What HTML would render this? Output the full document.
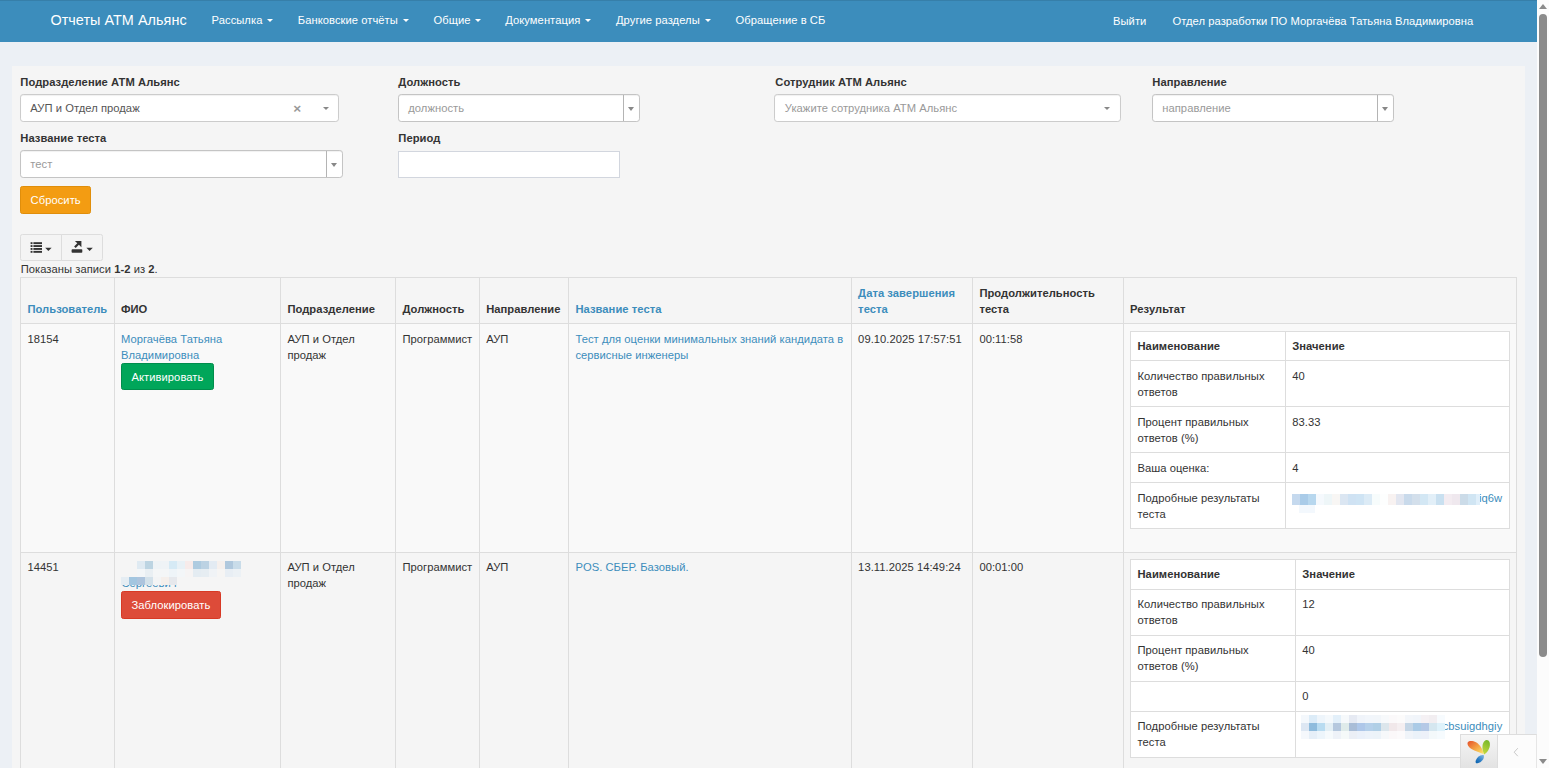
<!DOCTYPE html>
<html lang="ru">
<head>
<meta charset="utf-8">
<title>Отчеты АТМ Альянс</title>
<style>

*{box-sizing:border-box;}
html,body{margin:0;padding:0;}
body{font-family:"Liberation Sans",sans-serif;font-size:14px;line-height:20px;color:#333;background:#ecf0f5;overflow:hidden;letter-spacing:0.06px;}
a{color:#3c8dbc;text-decoration:none;}
#page{zoom:0.8;position:absolute;left:0;top:0;width:1936.25px;height:960px;overflow:hidden;background:#ecf0f5;}
/* navbar */
.navbar{position:absolute;left:0;top:0;width:1921.25px;height:52px;background:#3c8dbc;border:1px solid #367fa9;border-left:0;border-right:0;border-bottom-color:#3c8dbc;color:#fff;}
.navbar .brand{position:absolute;left:63px;top:14px;font-size:18px;line-height:20px;color:#fff;white-space:nowrap;}
.navbar .nav{position:absolute;top:13.75px;line-height:20px;color:#fff;white-space:nowrap;font-size:14px;}
.caret{position:relative;top:-1px;display:inline-block;width:0;height:0;margin-left:2px;vertical-align:middle;border-top:4px solid;border-right:4px solid transparent;border-left:4px solid transparent;}
/* panel */
.panel{position:absolute;left:15px;top:82.5px;width:1891.25px;height:900px;background:#f5f5f5;padding:10px;}
label{position:absolute;margin-left:0.4px;font-weight:bold;line-height:20px;white-space:nowrap;}
.s2{position:absolute;height:34px;background:#fff;border:1px solid #ccc;border-radius:4px;box-shadow:inset 0 1px 1px rgba(0,0,0,.075);color:#555;line-height:34.5px;padding-left:11.6px;white-space:nowrap;}
.s2.ph{color:#999;}
.s2 .clr{position:absolute;top:-0.8px;line-height:34px;font-weight:bold;color:#999;font-size:17px;letter-spacing:0;}
.s2 .arr{position:absolute;top:14.4px;width:0;height:0;border-style:solid;border-color:#888 transparent transparent;border-width:4px 4px 0 4px;}
.s2.cl{border-color:#c4c4c4;}
.s2.cl .box{position:absolute;right:0;top:0;bottom:0;width:20px;border-left:1px solid #b4b4b4;}
.s2.cl .box i{position:absolute;left:5px;top:14px;width:0;height:0;border-style:solid;border-color:#888 transparent transparent;border-width:5px 4px 0 4px;}
.inp{position:absolute;height:34px;background:#fff;border:1px solid #d2d6de;}
.btn{position:absolute;display:block;height:34px;line-height:20px;padding:6px 12px;border:1px solid transparent;border-radius:3px;color:#fff;white-space:nowrap;text-align:center;}
.btn-warning{background:#f39c12;border-color:#e08e0b;}
.btn-success{background:#00a65a;border-color:#008d4c;}
.btn-danger{background:#dd4b39;border-color:#d73925;}
.btn-default{background:#f4f4f4;border-color:#ddd;color:#444;}
.summary{position:absolute;left:25.8px;line-height:20px;white-space:nowrap;}
/* grid */
table{border-collapse:collapse;border-spacing:0;}
table.grid{position:absolute;left:25px;top:346.25px;width:1870px;table-layout:fixed;background:transparent;}
table.grid th,table.grid td{white-space:nowrap;border:1px solid #ddd;padding:8px 8px 6px;line-height:20px;vertical-align:top;text-align:left;}
table.grid thead th{vertical-align:bottom;border-bottom-width:2px;font-weight:bold;padding-bottom:7px;}
table.grid>tbody>tr>td{padding-top:9px;}
table.grid>tbody>tr.r2>td{padding-top:7.75px;}
table.grid tbody tr.odd{background:#f9f9f9;}
table.in{width:100%;table-layout:fixed;background:#fff;margin-bottom:20px;}
table.in th,table.in td{border:1px solid #ddd;padding:7px 8px 6px;line-height:20px;vertical-align:top;text-align:left;}
table.in th{font-weight:bold;}
table.in td{padding-top:7.6px;}
table.in.t1 td{padding-top:8.85px;}
.sub{position:relative;display:block;}
.sub .btn{position:relative;display:inline-block;}
/* scrollbar */
#sb{position:absolute;left:1921.25px;top:0;width:15px;height:960px;background:#fcfcfc;}
#sb .thumb{position:absolute;left:2.5px;width:10px;top:17.5px;height:803.5px;border-radius:5px;background:#8b8b8b;}
#sb .up{position:absolute;left:2.5px;top:5px;width:0;height:0;border-style:solid;border-width:0 5px 7px 5px;border-color:transparent transparent #8b8b8b;}
#sb .dn{position:absolute;left:2.5px;top:949px;width:0;height:0;border-style:solid;border-width:7px 5px 0 5px;border-color:#8b8b8b transparent transparent;}
/* yii toolbar */
#yii{position:absolute;left:1824.4px;top:917.8px;width:96.9px;height:43px;border:1px solid #ddd;border-right:1px solid #e6e6e6;background:#fcfcfc;}
#yii .logo{position:absolute;left:0;top:0;width:47px;height:42px;border-right:1px solid #ddd;background:linear-gradient(#f6f6f6,#e2e2e2);}
</style>
</head>
<body>
<div id="page">

<div class="navbar">
  <span class="brand">Отчеты АТМ Альянс</span>
  <span class="nav" style="left:264.5px">Рассылка <b class="caret"></b></span>
  <span class="nav" style="left:372.3px">Банковские отчёты <b class="caret"></b></span>
  <span class="nav" style="left:541.8px">Общие <b class="caret"></b></span>
  <span class="nav" style="left:631.6px">Документация <b class="caret"></b></span>
  <span class="nav" style="left:770px">Другие разделы <b class="caret"></b></span>
  <span class="nav" style="left:919.5px">Обращение в СБ</span>
  <span class="nav" style="left:1391.25px;top:15px">Выйти</span>
  <span class="nav" style="left:1465.6px;top:15px">Отдел разработки ПО Моргачёва Татьяна Владимировна</span>
</div>

<div class="panel" id="panel"></div>

<label style="left:25px;top:92.5px">Подразделение АТМ Альянс</label>
<div class="s2" style="left:25px;top:118px;width:398.5px">АУП и Отдел продаж<span class="clr" style="left:340.4px">×</span><i class="arr" style="left:377.5px"></i></div>

<label style="left:497.5px;top:92.5px">Должность</label>
<div class="s2 cl ph" style="left:497.5px;top:118px;width:302px">должность<span class="box"><i></i></span></div>

<label style="left:968.75px;top:92.5px">Сотрудник АТМ Альянс</label>
<div class="s2 ph" style="left:968.1px;top:118px;width:433.6px">Укажите сотрудника АТМ Альянс<i class="arr" style="left:411px"></i></div>

<label style="left:1440px;top:92.5px">Направление</label>
<div class="s2 cl ph" style="left:1440px;top:118px;width:302px">направление<span class="box"><i></i></span></div>

<label style="left:25px;top:162.5px">Название теста</label>
<div class="s2 cl ph" style="left:25px;top:188px;width:403.75px">тест<span class="box"><i></i></span></div>

<label style="left:497.5px;top:162.5px">Период</label>
<div class="inp" style="left:497.5px;top:188.5px;width:277px"></div>

<a class="btn btn-warning" style="left:25px;top:233px;width:89px">Сбросить</a>

<div class="btn btn-default" style="left:25px;top:292.5px;width:52px;height:34px;border-radius:3px 0 0 3px;"></div>
<div class="btn btn-default" style="left:76px;top:292.5px;width:53px;height:34px;border-radius:0 3px 3px 0;"></div>

<div class="summary" style="top:326.5px">Показаны записи <b>1-2</b> из <b>2</b>.</div>

<table class="grid">
<colgroup>
<col style="width:116.9px"><col style="width:208.1px"><col style="width:143.75px"><col style="width:104.7px"><col style="width:111.6px"><col style="width:353.4px"><col style="width:151.6px"><col style="width:188.4px"><col style="width:491.5px">
</colgroup>
<thead>
<tr style="height:57.5px">
<th><a>Пользователь</a></th><th>ФИО</th><th>Подразделение</th><th>Должность</th><th>Направление</th><th><a>Название теста</a></th><th><a>Дата завершения<br>теста</a></th><th>Продолжительность<br>теста</th><th>Результат</th>
</tr>
</thead>
<tbody>
<tr class="odd" style="height:286.25px">
<td>18154</td>
<td><a>Моргачёва Татьяна<br>Владимировна</a><span class="sub"><a class="btn btn-success" style="width:116px">Активировать</a></span></td>
<td>АУП и Отдел<br>продаж</td>
<td>Программист</td>
<td>АУП</td>
<td><a>Тест для оценки минимальных знаний кандидата в<br>сервисные инженеры</a></td>
<td>09.10.2025 17:57:51</td>
<td>00:11:58</td>
<td style="padding-top:9.25px">
<table class="in t1"><colgroup><col style="width:193.4px"><col></colgroup>
<tr style="height:36.25px"><th>Наименование</th><th>Значение</th></tr>
<tr style="height:57.5px"><td>Количество правильных<br>ответов</td><td>40</td></tr>
<tr style="height:57.5px"><td>Процент правильных<br>ответов (%)</td><td>83.33</td></tr>
<tr style="height:37.5px"><td>Ваша оценка:</td><td>4</td></tr>
<tr style="height:57.5px"><td>Подробные результаты<br>теста</td><td><a style="padding-left:233.5px">iq6w</a></td></tr>
</table>
</td>
</tr>
<tr class="r2">
<td>14451</td>
<td><a>&nbsp;</a><br><a>&nbsp;</a><span class="sub"><a class="btn btn-danger" style="width:125px;margin-top:0;height:35.25px">Заблокировать</a></span></td>
<td>АУП и Отдел<br>продаж</td>
<td>Программист</td>
<td>АУП</td>
<td><a>POS. СБЕР. Базовый.</a></td>
<td>13.11.2025 14:49:24</td>
<td>00:01:00</td>
<td style="padding-top:8px">
<table class="in"><colgroup><col style="width:206px"><col></colgroup>
<tr style="height:37.5px"><th>Наименование</th><th>Значение</th></tr>
<tr style="height:57.5px"><td>Количество правильных<br>ответов</td><td>12</td></tr>
<tr style="height:57.5px"><td>Процент правильных<br>ответов (%)</td><td>40</td></tr>
<tr style="height:37.5px"><td>&nbsp;</td><td>0</td></tr>
<tr style="height:57.5px"><td>Подробные результаты<br>теста</td><td><a style="padding-left:175.5px">cbsuigdhgiy</a></td></tr>
</table>
</td>
</tr>
</tbody>
</table>

<div id="yii"><div class="logo"></div></div>
<div id="sb"><i class="up"></i><div class="thumb"></div><i class="dn"></i></div>

<svg id="ov" viewBox="0 0 1549 768" width="1936.25" height="960" style="position:absolute;left:0;top:0;pointer-events:none">
<defs>
<linearGradient id="go" x1="0" y1="0" x2="1" y2="1"><stop offset="0" stop-color="#e5502b"/><stop offset="0.5" stop-color="#f3a044"/><stop offset="0.85" stop-color="#fbd75f"/><stop offset="1" stop-color="#fdf08a"/></linearGradient>
<linearGradient id="gg" x1="0.6" y1="0" x2="0.3" y2="1"><stop offset="0" stop-color="#78b82a"/><stop offset="1" stop-color="#c5d93f"/></linearGradient>
<linearGradient id="gb" x1="0.9" y1="0" x2="0.1" y2="1"><stop offset="0" stop-color="#7fb6e2"/><stop offset="0.6" stop-color="#2a7cc4"/><stop offset="1" stop-color="#0a62ad"/></linearGradient>
<clipPath id="cp1"><rect x="118" y="585" width="70" height="8"/></clipPath>
</defs>
<g shape-rendering="crispEdges">
<rect x="137" y="561" width="8" height="8" fill="#dfeaf2"/><rect x="145" y="561" width="8" height="8" fill="#bcd4e2"/><rect x="153" y="561" width="8" height="8" fill="#eef3f6"/><rect x="161" y="561" width="8" height="8" fill="#eff3f6"/><rect x="169" y="561" width="8" height="8" fill="#d6eaf5"/><rect x="177" y="561" width="8" height="8" fill="#e8f1f6"/><rect x="185" y="561" width="8" height="8" fill="#f7ebea"/><rect x="193" y="561" width="8" height="8" fill="#aecbe0"/><rect x="201" y="561" width="8" height="8" fill="#bcd2e3"/><rect x="209" y="561" width="8" height="8" fill="#e3ebf3"/><rect x="217" y="561" width="8" height="8" fill="#f6f0ed"/><rect x="225" y="561" width="8" height="8" fill="#b0c8dd"/><rect x="233" y="561" width="8" height="8" fill="#c9dce9"/>
<rect x="137" y="569" width="8" height="8" fill="#f3f6f8"/><rect x="145" y="569" width="8" height="8" fill="#e9eff3"/><rect x="153" y="569" width="8" height="8" fill="#f4f6f7"/><rect x="161" y="569" width="8" height="8" fill="#f4f6f7"/><rect x="169" y="569" width="8" height="8" fill="#eef4f8"/><rect x="177" y="569" width="8" height="8" fill="#f3f6f8"/><rect x="185" y="569" width="8" height="8" fill="#f6f4f4"/><rect x="193" y="569" width="8" height="8" fill="#e4ecf2"/><rect x="201" y="569" width="8" height="8" fill="#e6edf2"/><rect x="209" y="569" width="8" height="8" fill="#f0f3f6"/><rect x="217" y="569" width="8" height="8" fill="#f6f5f4"/><rect x="225" y="569" width="8" height="8" fill="#e8eef4"/><rect x="233" y="569" width="8" height="8" fill="#ecf1f5"/>
<rect x="121" y="577" width="8" height="8" fill="#e5edf3"/><rect x="129" y="577" width="8" height="8" fill="#a3c6e0"/><rect x="137" y="577" width="8" height="8" fill="#adc4dd"/><rect x="145" y="577" width="8" height="8" fill="#d3e1ea"/><rect x="153" y="577" width="8" height="8" fill="#f3f4f5"/><rect x="161" y="577" width="8" height="8" fill="#f5efeb"/><rect x="169" y="577" width="8" height="8" fill="#e6e8ec"/>
<rect x="1292" y="494" width="8" height="11" fill="#c5d9ee"/><rect x="1300" y="494" width="8" height="11" fill="#a9cbe8"/><rect x="1308" y="494" width="8" height="11" fill="#b7d7ee"/><rect x="1316" y="494" width="8" height="11" fill="#f5f9fd"/><rect x="1324" y="494" width="8" height="11" fill="#eef6f8"/><rect x="1332" y="494" width="8" height="11" fill="#f8f6f4"/><rect x="1340" y="494" width="8" height="11" fill="#dbe6f2"/><rect x="1348" y="494" width="8" height="11" fill="#cfe2f3"/><rect x="1356" y="494" width="8" height="11" fill="#cfe4f4"/><rect x="1364" y="494" width="8" height="11" fill="#dcebf6"/><rect x="1372" y="494" width="8" height="11" fill="#f7fcfc"/><rect x="1380" y="494" width="8" height="11" fill="#fdfefe"/><rect x="1388" y="494" width="8" height="11" fill="#f8f2f1"/><rect x="1396" y="494" width="8" height="11" fill="#e2e6f0"/><rect x="1404" y="494" width="8" height="11" fill="#c9daeb"/><rect x="1412" y="494" width="8" height="11" fill="#d3dfeb"/><rect x="1420" y="494" width="8" height="11" fill="#d3e7f4"/><rect x="1428" y="494" width="8" height="11" fill="#e2eff8"/><rect x="1436" y="494" width="8" height="11" fill="#c9e0f0"/><rect x="1444" y="494" width="8" height="11" fill="#f3ecf1"/><rect x="1452" y="494" width="8" height="11" fill="#efe8ee"/><rect x="1460" y="494" width="8" height="11" fill="#cbdbe8"/><rect x="1468" y="494" width="8" height="11" fill="#d0e5f3"/>
<rect x="1476" y="494" width="4" height="11" fill="#e0effa"/>
<rect x="1299" y="505" width="16" height="8" fill="#f3f8fd"/>
<rect x="1301" y="715" width="8" height="8" fill="#f4f8fc"/><rect x="1309" y="715" width="8" height="8" fill="#dcecf8"/><rect x="1317" y="715" width="8" height="8" fill="#eef5fb"/><rect x="1325" y="715" width="8" height="8" fill="#f5f9fc"/><rect x="1333" y="715" width="8" height="8" fill="#e3f0fa"/><rect x="1341" y="715" width="8" height="8" fill="#f6f9fb"/><rect x="1349" y="715" width="8" height="8" fill="#e6eaf3"/><rect x="1357" y="715" width="8" height="8" fill="#f0f4fa"/><rect x="1365" y="715" width="8" height="8" fill="#f2f6fb"/><rect x="1373" y="715" width="8" height="8" fill="#f2f6fa"/><rect x="1381" y="715" width="8" height="8" fill="#f7f9fb"/><rect x="1389" y="715" width="8" height="8" fill="#fbf9fa"/><rect x="1397" y="715" width="8" height="8" fill="#fcfbfb"/><rect x="1405" y="715" width="8" height="8" fill="#f3f6fa"/><rect x="1413" y="715" width="8" height="8" fill="#f1f5fa"/><rect x="1421" y="715" width="8" height="8" fill="#f5f1f4"/><rect x="1429" y="715" width="8" height="8" fill="#f2eef1"/><rect x="1437" y="715" width="8" height="8" fill="#f7fbfe"/>
<rect x="1301" y="723" width="8" height="8" fill="#dde7f3"/><rect x="1309" y="723" width="8" height="8" fill="#8fbcdd"/><rect x="1317" y="723" width="8" height="8" fill="#b9dcf1"/><rect x="1325" y="723" width="8" height="8" fill="#e3eff5"/><rect x="1333" y="723" width="8" height="8" fill="#b5c8de"/><rect x="1341" y="723" width="8" height="8" fill="#dfebea"/><rect x="1349" y="723" width="8" height="8" fill="#a9bdd7"/><rect x="1357" y="723" width="8" height="8" fill="#aec7e9"/><rect x="1365" y="723" width="8" height="8" fill="#b5d0ea"/><rect x="1373" y="723" width="8" height="8" fill="#b0cfe6"/><rect x="1381" y="723" width="8" height="8" fill="#dce6ec"/><rect x="1389" y="723" width="8" height="8" fill="#f1e8ea"/><rect x="1397" y="723" width="8" height="8" fill="#f5eff1"/><rect x="1405" y="723" width="8" height="8" fill="#c5d6e6"/><rect x="1413" y="723" width="8" height="8" fill="#abcbe6"/><rect x="1421" y="723" width="8" height="8" fill="#b5c9e6"/><rect x="1429" y="723" width="8" height="8" fill="#d5e7f0"/><rect x="1437" y="723" width="8" height="8" fill="#def2fb"/>
<rect x="1301" y="731" width="8" height="8" fill="#f5f8fc"/><rect x="1309" y="731" width="8" height="8" fill="#e6eff8"/><rect x="1317" y="731" width="8" height="8" fill="#edf5fb"/><rect x="1325" y="731" width="8" height="8" fill="#f6fafc"/><rect x="1333" y="731" width="8" height="8" fill="#eef2f8"/><rect x="1341" y="731" width="8" height="8" fill="#f5f9f9"/><rect x="1349" y="731" width="8" height="8" fill="#ebeff6"/><rect x="1357" y="731" width="8" height="8" fill="#ebf1fa"/><rect x="1365" y="731" width="8" height="8" fill="#edf3fa"/><rect x="1373" y="731" width="8" height="8" fill="#ecf3f9"/><rect x="1381" y="731" width="8" height="8" fill="#f6f8fa"/><rect x="1389" y="731" width="8" height="8" fill="#fbf8f9"/><rect x="1397" y="731" width="8" height="8" fill="#fcfafb"/><rect x="1405" y="731" width="8" height="8" fill="#f0f4f9"/><rect x="1413" y="731" width="8" height="8" fill="#ebf2f9"/><rect x="1421" y="731" width="8" height="8" fill="#edf1f9"/><rect x="1429" y="731" width="8" height="8" fill="#f4f9fb"/><rect x="1437" y="731" width="8" height="8" fill="#f6fbfe"/>
</g>
<text x="121.4" y="587.3" font-family="Liberation Sans" font-size="11.2" fill="#3c8dbc" clip-path="url(#cp1)">Сергеевич</text>
<g fill="#333"><rect x="30.6" y="242.2" width="1.9" height="1.9"/><rect x="33.4" y="242.2" width="8.6" height="1.9"/><rect x="30.6" y="245.1" width="1.9" height="1.9"/><rect x="33.4" y="245.1" width="8.6" height="1.9"/><rect x="30.6" y="248" width="1.9" height="1.9"/><rect x="33.4" y="248" width="8.6" height="1.9"/><rect x="30.6" y="250.9" width="1.9" height="1.9"/><rect x="33.4" y="250.9" width="8.6" height="1.9"/><path d="M45.2 247.7h6.4l-3.2 3.2z"/><path d="M72.4 249.3h9.1a0.8 0.8 0 0 1 0.8 0.8v1.8a0.8 0.8 0 0 1 -0.8 0.8h-9.1a0.8 0.8 0 0 1 -0.8 -0.8v-1.8a0.8 0.8 0 0 1 0.8 -0.8z"/><path d="M74.9 240.9h6.5v6.4l-2.5-2.5-3.2 3.2-1.6-1.6 3.2-3.2z"/><path d="M86.4 247.7h6.4l-3.2 3.2z"/></g>
<path d="M1483.8 754.3 C1483 750 1480.5 745 1476 742.3 C1473 740.6 1469 740.4 1467.8 742.2 C1466.8 744 1468.5 747.2 1471.5 749 C1475 751.2 1480 752.6 1483.8 754.3z" fill="url(#go)"/>
<path d="M1484.3 754.6 C1482 750 1481.6 744.5 1484.3 741.3 C1486.3 739.2 1488.5 739.8 1489.6 742.3 C1490.8 746.5 1488.5 751.5 1484.3 754.6z" fill="url(#gg)"/>
<path d="M1483.9 755.2 C1484.5 759 1481.5 762.3 1477.5 763.2 C1475.3 763.6 1475.3 762 1475.9 760.3 C1477.3 756.8 1480.3 754.3 1483.9 755.2z" fill="url(#gb)"/>
<path d="M1517.8 748.2 L1514.2 752.2 L1517.8 756.2" stroke="#bbb" stroke-width="0.8" fill="none"/>
</svg>
</div>
</body>
</html>
